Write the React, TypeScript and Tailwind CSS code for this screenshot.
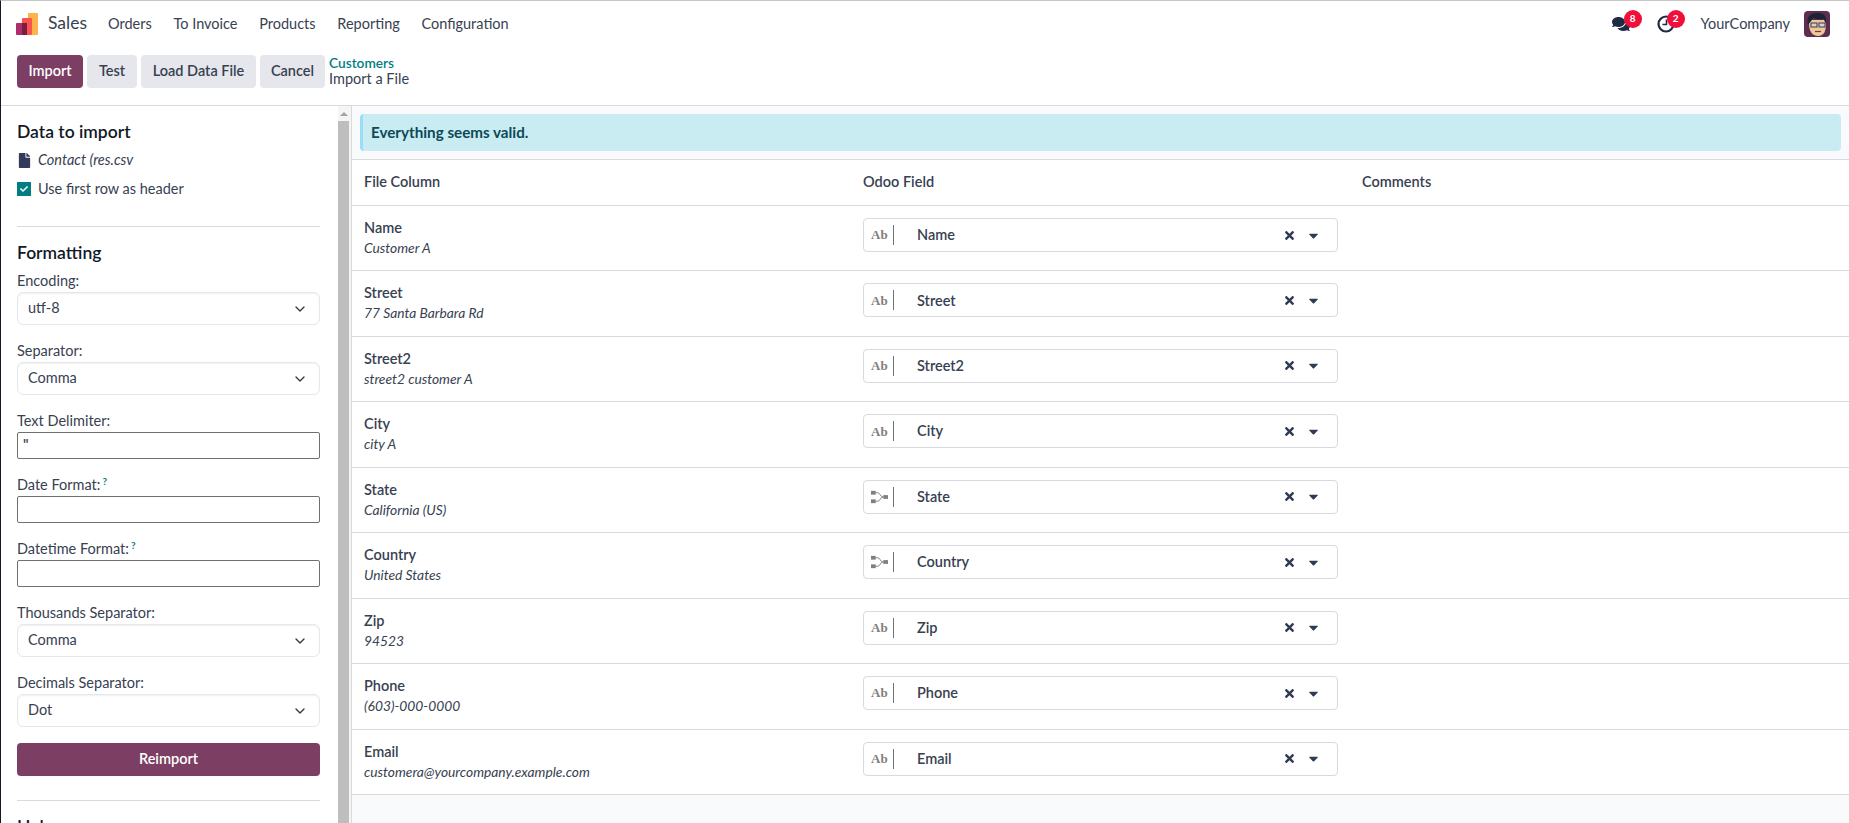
import React from 'react';
import { ChevronDown } from 'lucide-react';
import { FaComments, FaFile, FaTimes, FaCaretDown, FaCheck } from 'react-icons/fa';

const navItems = ['Orders', 'To Invoice', 'Products', 'Reporting', 'Configuration'];

const rows = [
  { name: 'Name', sample: 'Customer A', relation: false },
  { name: 'Street', sample: '77 Santa Barbara Rd', relation: false },
  { name: 'Street2', sample: 'street2 customer A', relation: false },
  { name: 'City', sample: 'city A', relation: false },
  { name: 'State', sample: 'California (US)', relation: true },
  { name: 'Country', sample: 'United States', relation: true },
  { name: 'Zip', sample: '94523', relation: false },
  { name: 'Phone', sample: '(603)-000-0000', relation: false },
  { name: 'Email', sample: 'customera@yourcompany.example.com', relation: false },
];

const SalesLogo = () => (
  <svg width="22" height="22" viewBox="0 0 22 22">
    <rect x="12" y="0" width="10" height="22" rx="1" fill="#fbb34a" />
    <rect x="6" y="5" width="10" height="17" rx="1" fill="#f85450" />
    <rect x="0" y="10" width="11" height="12" rx="1" fill="#ac2f6c" />
    <rect x="6" y="10" width="5" height="12" fill="#7c1f3f" />
  </svg>
);

const ClockIcon = () => (
  <svg width="18" height="18" viewBox="0 0 18 18" fill="none" stroke="#1f2a44">
    <circle cx="9" cy="9" r="7.5" strokeWidth="2.2" />
    <path d="M9.5 4.5V9.5H5.5" strokeWidth="1.6" />
  </svg>
);

const Avatar = () => (
  <svg width="26" height="26" viewBox="0 0 26 26">
    <rect width="26" height="26" rx="4" fill="#5e2e50" />
    <path d="M5 12c0 8 3 13 9 13s8-5 8-12l-2-4H8z" fill="#efc79c" />
    <path d="M4 14C2 6 6 2 13 2c6 0 10 2 9 10l-2-4c-4 1-8 0-11-1z" fill="#1d2238" />
    <rect x="7" y="12" width="6" height="4" fill="#cfd3d6" stroke="#3a3a44" />
    <rect x="15" y="12" width="6" height="4" fill="#cfd3d6" stroke="#3a3a44" />
    <path d="M11 20.5h6" stroke="#7a3b2e" strokeWidth="1.2" />
  </svg>
);

const RelationIcon = () => (
  <svg width="18" height="14" viewBox="0 0 18 14" fill="none">
    <rect x="0" y="0.5" width="5" height="4" fill="#808080" />
    <rect x="0" y="9.5" width="5" height="4" fill="#808080" />
    <rect x="13" y="5" width="5" height="4" fill="#808080" />
    <path d="M5 2.5h2c3 0 2.5 4.5 6 4.5M5 11.5h2c3 0 2.5-4.5 6-4.5" stroke="#808080" />
  </svg>
);

const Badge = ({ value, className }: { value: string; className: string }) => (
  <span className={`absolute -top-[5px] flex h-[18px] w-[18px] items-center justify-center rounded-full bg-[#ef0f3a] text-[10px] font-bold text-white ${className}`}>
    {value}
  </span>
);

const SelectBox = ({ label, value }: { label: string; value: string }) => (
  <div className="mb-4">
    <div className="h-5 leading-5">{label}</div>
    <div className="mt-px flex h-[33px] items-center justify-between rounded-md border border-[#e5e7eb] pl-[10px] pr-[11px] shadow-[inset_0_1px_2px_rgba(0,0,0,0.06)]">
      <span className="pb-[2px]">{value}</span>
      <ChevronDown size={16} strokeWidth={2} className="text-[#343a40]" />
    </div>
  </div>
);

const InputBox = ({ label, value, help }: { label: string; value?: string; help?: boolean }) => (
  <div className="mb-4">
    <div className="h-5 leading-5">
      {label}
      {help && <sup className="ml-[2px] text-[10px] font-bold text-[#017e84]">?</sup>}
    </div>
    <div className="mt-px h-[27px] rounded-[2px] border border-[#6f7070] px-[5px] font-semibold leading-[23px]">{value}</div>
  </div>
);

const ImportRow = ({ name, sample, relation }: { name: string; sample: string; relation: boolean }) => (
  <div className="grid h-[65.44px] grid-cols-3 border-b border-[#d8dadd] bg-white">
    <div className="px-3 pt-3">
      <div className="h-5 font-semibold leading-5">{name}</div>
      <div className="h-5 text-[13.8px] italic leading-5">{sample}</div>
    </div>
    <div className="px-3 pt-3">
      <div className="flex h-[34px] items-center rounded-[4px] border border-[#d8dadd] pl-[7px] pr-[16px]">
        <span className="flex h-5 w-[23px] shrink-0 items-center border-r border-[#6c757d] pr-[5px]">
          {relation ? (
            <RelationIcon />
          ) : (
            <span className="font-['Liberation_Serif',serif] text-[13px] font-bold text-[#808080]">Ab</span>
          )}
        </span>
        <span className="ml-[23px] flex-1 font-semibold">{name}</span>
        <FaTimes size={13} className="text-[#2f3b52]" />
        <FaCaretDown size={15} className="ml-[10px] text-[#2f3b52]" />
      </div>
    </div>
    <div />
  </div>
);

export default function App() {
  return (
    <div className="h-[823px] overflow-hidden border-l border-t border-l-[#1a1528] border-t-[#c6c6c6] bg-white font-['Lato',sans-serif] text-[14.5px] text-[#374151]">
      <nav className="flex h-[45px] items-center pl-[15px] pr-[19px]">
        <SalesLogo />
        <span className="ml-[10px] mr-[21px] text-[17.5px]">Sales</span>
        <div className="flex gap-[21.7px]">
          {navItems.map((item) => (
            <span key={item}>{item}</span>
          ))}
        </div>
        <div className="ml-auto flex items-center">
          <span className="relative mr-[27px]">
            <FaComments size={18} className="text-[#1f2a44]" />
            <Badge value="8" className="-right-[12px]" />
          </span>
          <span className="relative mr-[26px]">
            <ClockIcon />
            <Badge value="2" className="-right-[10px]" />
          </span>
          <span className="mr-[14px]">YourCompany</span>
          <Avatar />
        </div>
      </nav>

      <div className="flex h-[60px] items-start border-b border-[#d8dadd] pl-4 pt-[9px]">
        <div className="flex gap-1">
          <button className="h-[33px] w-[66px] rounded-[4px] bg-[#7c3f63] pb-[2px] font-semibold text-white">Import</button>
          <button className="h-[33px] w-[50px] rounded-[4px] bg-[#e6e7ec] pb-[2px] font-semibold">Test</button>
          <button className="h-[33px] w-[115px] rounded-[4px] bg-[#e6e7ec] pb-[2px] font-semibold">Load Data File</button>
          <button className="h-[33px] w-[65px] rounded-[4px] bg-[#e6e7ec] pb-[2px] font-semibold">Cancel</button>
        </div>
        <div className="ml-1 leading-4">
          <div className="text-[13.7px] font-semibold text-[#017e84]">Customers</div>
          <div>Import a File</div>
        </div>
      </div>

      <div className="flex h-[717px]">
        <aside className="w-[337px] shrink-0 overflow-hidden pl-4 pr-[18px] pt-[15px]">
          <h2 className="h-[22px] text-[17.5px] font-semibold leading-[22px] text-[#111827]">Data to import</h2>
          <div className="mt-[7px] flex h-5 items-center">
            <FaFile size={15} className="text-[#343b58]" />
            <span className="ml-[6px] italic">Contact (res.csv</span>
          </div>
          <div className="mt-[9px] flex h-5 items-center">
            <span className="flex h-[14px] w-[14px] items-center justify-center bg-[#017e84]">
              <FaCheck size={8} className="text-white" />
            </span>
            <span className="ml-[7px]">Use first row as header</span>
          </div>
          <div className="mt-[27px] h-px bg-[#d8dadd]" />
          <h2 className="mt-[15px] mb-[7px] h-[22px] text-[17.5px] font-semibold leading-[22px] text-[#111827]">Formatting</h2>
          <SelectBox label="Encoding:" value="utf-8" />
          <SelectBox label="Separator:" value="Comma" />
          <InputBox label="Text Delimiter:" value={'"'} />
          <InputBox label="Date Format:" help />
          <InputBox label="Datetime Format:" help />
          <SelectBox label="Thousands Separator:" value="Comma" />
          <SelectBox label="Decimals Separator:" value="Dot" />
          <button className="h-[33px] w-full rounded-[4px] bg-[#7c3f63] pb-[2px] font-semibold text-white">Reimport</button>
          <div className="mt-6 h-px bg-[#d8dadd]" />
          <h2 className="mt-[15px] h-[22px] text-[17.5px] font-semibold leading-[22px] text-[#111827]">Help</h2>
        </aside>

        <div className="flex w-[14px] shrink-0 flex-col border-r border-[#d8dadd] bg-[#f5f5f5] pr-[2px]">
          <div className="flex h-[15px] items-center justify-center">
            <span className="h-0 w-0 border-x-[4px] border-b-[4px] border-x-transparent border-b-[#a3a3a3]" />
          </div>
          <div className="flex-1 bg-[#bebebe]" />
        </div>

        <main className="flex-1 bg-[#f9fafb]">
          <div className="h-[54px] border-b border-[#d8dadd] px-2 pt-2">
            <div className="flex h-[37px] items-center rounded-[4px] border-l-[3px] border-[#9bdcf7] bg-[#c8ecf1] pb-px pl-2 text-[15.2px] font-bold text-[#0e4958]">
              Everything seems valid.
            </div>
          </div>
          <div className="grid h-[46px] grid-cols-3 items-center border-b border-[#d8dadd] bg-white pb-px font-semibold">
            <span className="px-3">File Column</span>
            <span className="px-3">Odoo Field</span>
            <span className="px-3">Comments</span>
          </div>
          {rows.map((row) => (
            <ImportRow key={row.name} {...row} />
          ))}
        </main>
      </div>
    </div>
  );
}
